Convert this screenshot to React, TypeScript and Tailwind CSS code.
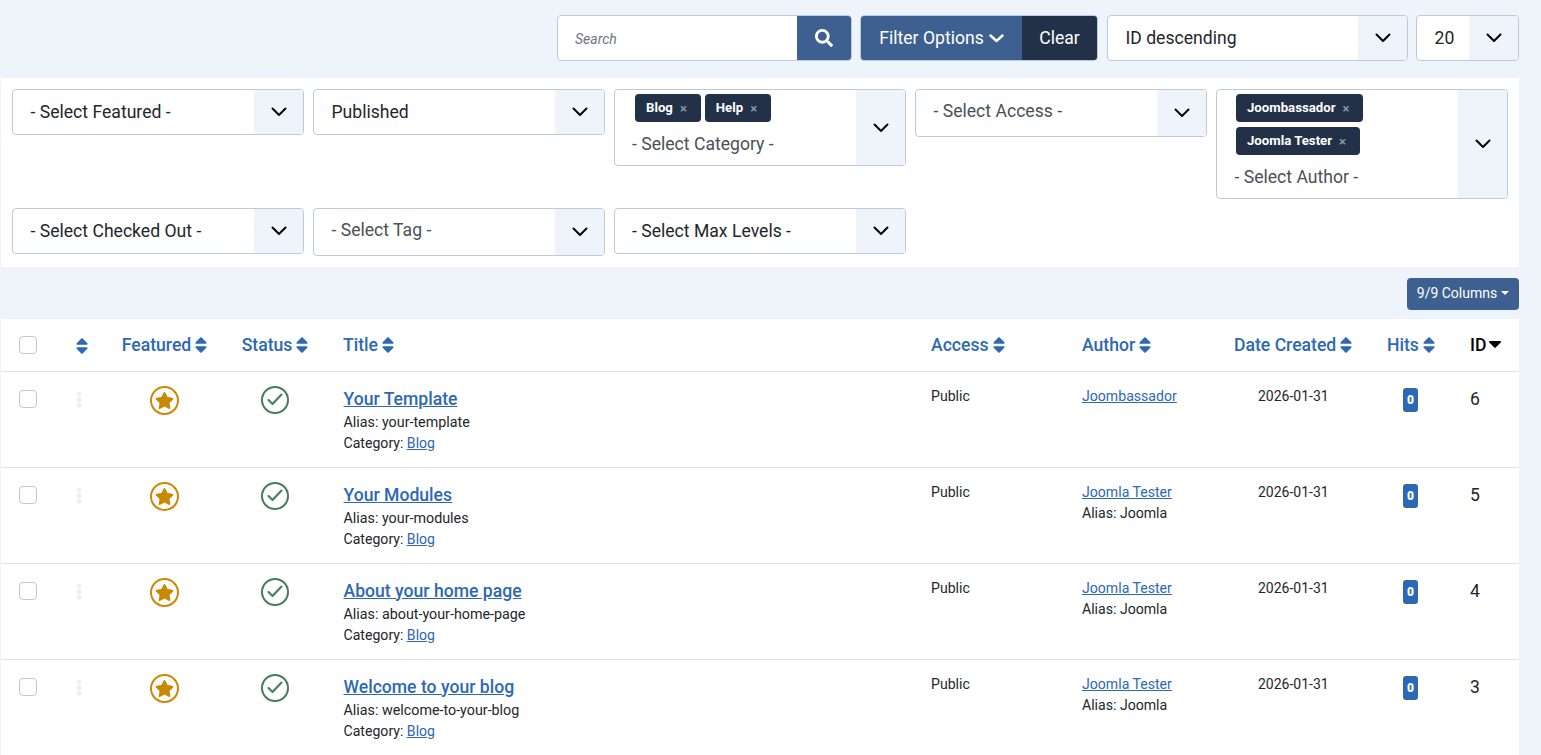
import { FaSearch, FaSort, FaStar } from "react-icons/fa";

const rows = [
  { title: "Your Template", alias: "your-template", author: "Joombassador", authorAlias: "", id: 6 },
  { title: "Your Modules", alias: "your-modules", author: "Joomla Tester", authorAlias: "Joomla", id: 5 },
  { title: "About your home page", alias: "about-your-home-page", author: "Joomla Tester", authorAlias: "Joomla", id: 4 },
  { title: "Welcome to your blog", alias: "welcome-to-your-blog", author: "Joomla Tester", authorAlias: "Joomla", id: 3 },
];

function Chevron() {
  return (
    <svg width="16" height="10" viewBox="0 0 16 10" fill="none" stroke="#000" strokeWidth="2" strokeLinecap="round" strokeLinejoin="round">
      <path d="M1.5 1.5 8 8l6.5-6.5" />
    </svg>
  );
}

function Select({ label, muted, className, labelClass }: { label: string; muted?: boolean; className: string; labelClass?: string }) {
  return (
    <div className={`flex overflow-hidden rounded border border-[#b9cae3] bg-white ${className}`}>
      <div className={`flex flex-1 items-center pl-[17.5px] text-[17.6px] ${muted ? "text-[#495057]" : "text-[#22262a]"} ${labelClass ?? ""}`}>
        {label}
      </div>
      <div className="flex w-[49px] items-center justify-center bg-[#eff4fb]">
        <Chevron />
      </div>
    </div>
  );
}

function Chip({ label }: { label: string }) {
  return (
    <span className="flex h-[28px] items-center gap-[7px] rounded bg-[#223148] pl-[11px] pr-[14px] text-[13.2px] font-bold text-white">
      {label}
      <span className="text-[13px] font-bold leading-none text-[#8d96a3]">×</span>
    </span>
  );
}

function ChipSelect({ chips, label, className, stacked }: { chips: string[]; label: string; className: string; stacked?: boolean }) {
  return (
    <div className={`flex w-[292px] overflow-hidden rounded border border-[#b9cae3] bg-white ${className}`}>
      <div className={`flex-1 pt-[4px] text-[17.6px] text-[#495057] ${stacked ? "pl-[17.5px]" : "pl-[17px]"}`}>
        <div className={`flex ${stacked ? "flex-col items-start gap-[5px] pl-[1.5px]" : "gap-[4px] pl-[3px]"}`}>
          {chips.map((c) => (
            <Chip key={c} label={c} />
          ))}
        </div>
        <div className="mt-[9px]">{label}</div>
      </div>
      <div className="flex w-[49px] items-center justify-center bg-[#eff4fb]">
        <Chevron />
      </div>
    </div>
  );
}

function SortHead({ label }: { label?: string }) {
  return (
    <span className="inline-flex items-center align-middle text-[17.6px] font-medium text-[#2d68b5]">
      {label}
      <FaSort className="text-[20px]" />
    </span>
  );
}

function Checkbox() {
  return <span className="block h-[18px] w-[18px] rounded border border-[#b9cae3] bg-white" />;
}

export default function App() {
  return (
    <div className="h-[755px] overflow-hidden bg-[#eff4fb] font-['Roboto',sans-serif]">
      {/* toolbar */}
      <div className="flex justify-end gap-[8px] pr-[22px] pt-[15px]">
        <div className="flex h-[46px] w-[295px] overflow-hidden rounded border border-[#b9cae3] bg-white">
          <div className="flex flex-1 items-center pl-[17px] pt-[2px] text-[14px] italic text-[#6d757e]">Search</div>
          <div className="flex w-[54px] items-center justify-center bg-[#3d6090] text-[18px] text-white">
            <FaSearch />
          </div>
        </div>
        <div className="flex h-[46px] w-[238px] overflow-hidden rounded border border-[#b9cae3] text-[17.6px] text-white">
          <div className="flex flex-1 items-center justify-center gap-[5px] bg-[#3d6090]">
            Filter Options
            <svg width="15" height="9" viewBox="0 0 15 9" fill="none" stroke="#fff" strokeWidth="2.4" strokeLinecap="round" strokeLinejoin="round">
              <path d="M1.5 1.5 7.5 7l6-5.5" />
            </svg>
          </div>
          <div className="flex w-[75px] items-center justify-center bg-[#223148]">Clear</div>
        </div>
        <Select label="ID descending" className="ml-[1px] h-[46px] w-[301px]" />
        <Select label="20" className="h-[46px] w-[103px]" />
      </div>

      {/* filters */}
      <div className="ml-[1px] mt-[17px] flex w-[1518px] flex-wrap items-start gap-x-[9px] gap-y-[9px] bg-white px-[11px] py-[11px]">
        <Select label="- Select Featured -" className="h-[46px] w-[292px]" />
        <Select label="Published" className="h-[46px] w-[292px]" />
        <ChipSelect chips={["Blog", "Help"]} label="- Select Category -" className="h-[77px]" />
        <Select label="- Select Access -" muted className="h-[48px] w-[292px]" labelClass="pb-[4px]" />
        <ChipSelect chips={["Joombassador", "Joomla Tester"]} label="- Select Author -" className="h-[110px]" stacked />
        <Select label="- Select Checked Out -" className="h-[46px] w-[292px]" />
        <Select label="- Select Tag -" muted className="h-[48px] w-[292px]" labelClass="pb-[4px]" />
        <Select label="- Select Max Levels -" className="h-[46px] w-[292px]" labelClass="-ml-[0.5px]" />
      </div>

      {/* columns */}
      <div className="flex justify-end pr-[22px] pt-[11px]">
        <button className="flex h-[32px] w-[112px] items-center justify-center gap-[4px] rounded bg-[#3d6090] pb-[2px] text-[14px] text-white">
          9/9 Columns
          <span className="h-0 w-0 border-x-[4px] border-t-[4px] border-x-transparent border-t-white" />
        </button>
      </div>

      {/* table */}
      <table className="ml-[1px] mt-[9px] w-[1518px] table-fixed border-collapse bg-white text-left">
        <colgroup>
          <col className="w-[54px]" />
          <col className="w-[53px]" />
          <col className="w-[112px]" />
          <col className="w-[110px]" />
          <col className="w-[588px]" />
          <col className="w-[151px]" />
          <col className="w-[152px]" />
          <col className="w-[154px]" />
          <col className="w-[82px]" />
          <col className="w-[62px]" />
        </colgroup>
        <thead>
          <tr className="h-[52px] border-b border-[#dfe3e7]">
            <th className="pl-[18px] font-normal"><Checkbox /></th>
            <th className="text-center font-normal"><SortHead /></th>
            <th className="pl-[5px] text-center font-normal"><SortHead label="Featured" /></th>
            <th className="pl-[4px] text-center font-normal"><SortHead label="Status" /></th>
            <th className="pl-[13px] font-normal"><SortHead label="Title" /></th>
            <th className="pl-[13px] font-normal"><SortHead label="Access" /></th>
            <th className="pl-[13px] font-normal"><SortHead label="Author" /></th>
            <th className="pl-[13px] font-normal"><SortHead label="Date Created" /></th>
            <th className="pl-[12px] font-normal"><SortHead label="Hits" /></th>
            <th className="pl-[13px] font-normal">
              <span className="inline-flex items-center gap-[3px] align-middle text-[17.6px] font-medium text-black">
                ID
                <svg width="12" height="7" viewBox="0 0 12 7" fill="#000">
                  <path d="M1 0h10c.9 0 1.3 1 .7 1.6L6.7 6.6c-.4.4-1 .4-1.4 0L.3 1.6C-.3 1 .1 0 1 0Z" />
                </svg>
              </span>
            </th>
          </tr>
        </thead>
        <tbody>
          {rows.map((r) => (
            <tr key={r.id} className="h-[96px] border-b border-[#dfe3e7] align-top text-[14px] text-[#22262a]">
              <td className="pl-[18px] pt-[18px]"><Checkbox /></td>
              <td className="pr-[5px] pt-[19px]">
                <svg className="mx-auto" width="6" height="17" viewBox="0 0 6 17" fill="#edeff2">
                  <circle cx="3" cy="3" r="2.5" />
                  <circle cx="3" cy="8.5" r="2.5" />
                  <circle cx="3" cy="14" r="2.5" />
                </svg>
              </td>
              <td className="pt-[14px]">
                <span className="mx-auto flex h-[29px] w-[29px] items-center justify-center rounded-full border-2 border-[#c98800] text-[19px] text-[#c98800]">
                  <FaStar />
                </span>
              </td>
              <td className="pt-[14px]">
                <span className="mx-auto flex h-[28px] w-[28px] items-center justify-center rounded-full border-2 border-[#457d54]">
                  <svg width="16" height="13" viewBox="0 0 16 13" fill="none" stroke="#457d54" strokeWidth="2" strokeLinecap="round" strokeLinejoin="round">
                    <path d="M1.5 7 5.5 11 14.5 1.5" />
                  </svg>
                </span>
              </td>
              <td className="pl-[13.5px] pt-[15px]">
                <a className="block text-[17.6px] font-medium leading-[25px] text-[#2d68b5] underline">{r.title}</a>
                <div className="text-[14.3px] leading-[21px]">Alias: {r.alias}</div>
                <div className="text-[14.1px] leading-[21px]">
                  Category: <a className="text-[#2d68b5] underline">Blog</a>
                </div>
              </td>
              <td className="pl-[13px] pt-[14px] text-[14.1px] leading-[21px]">Public</td>
              <td className="pl-[13px] pt-[14px] text-[14.1px] leading-[21px]">
                <a className="block text-[#2d68b5] underline">{r.author}</a>
                {r.authorAlias && <div>Alias: {r.authorAlias}</div>}
              </td>
              <td className="pl-[37px] pt-[14px] leading-[21px]">2026-01-31</td>
              <td className="pl-[28px] pt-[16px]">
                <span className="flex h-[24px] w-[15px] items-center justify-center rounded-[3px] bg-[#2d68b5] text-[12px] font-black text-white">0</span>
              </td>
              <td className="pl-[13px] pt-[15px] text-[17.6px] leading-[25px]">{r.id}</td>
            </tr>
          ))}
        </tbody>
      </table>
    </div>
  );
}
